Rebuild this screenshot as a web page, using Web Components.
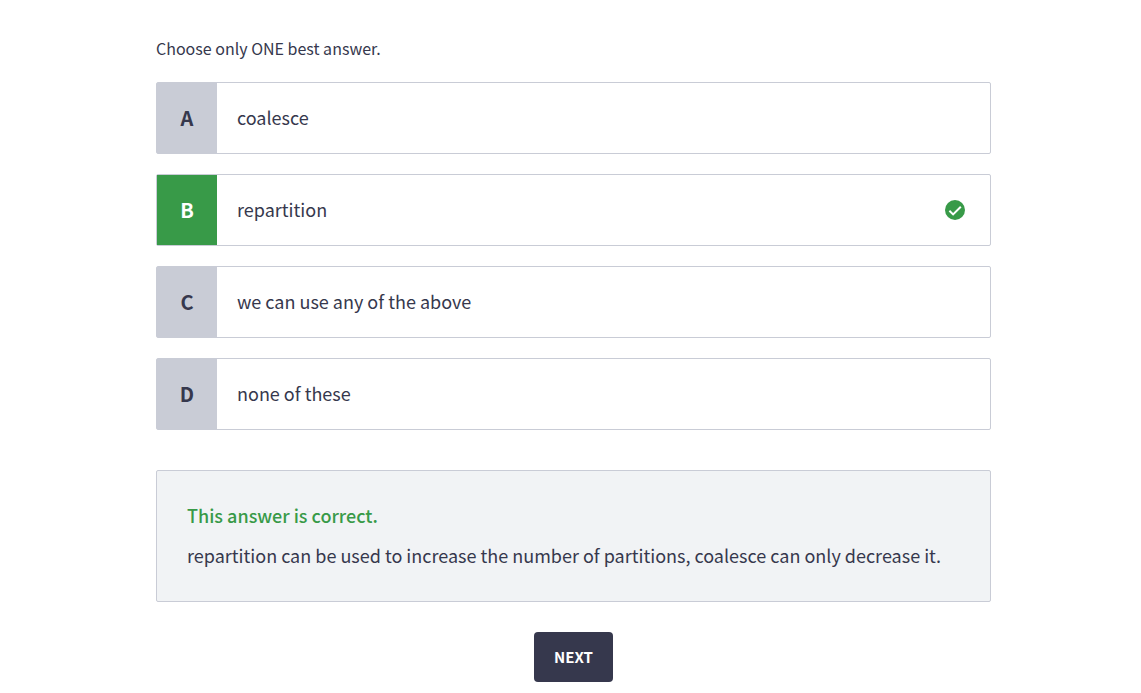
<!DOCTYPE html>
<html lang="en">
<head>
<meta charset="utf-8">
<meta name="viewport" content="width=device-width, initial-scale=1">
<title>Quiz</title>
<style>
  :root {
    --ink: #36384d;
    --line: #c9ccd6;
    --panel: #f1f3f5;
    --green: #389a48;
  }
  body {
    margin: 0;
    padding: 34px 16px 11px 22px;
    background: #fff;
    color: var(--ink);
    font: 18px/28px "Noto Sans CJK SC", "Open Sans", sans-serif;
  }
</style>
</head>
<body>
<quiz-question>
  <span slot="hint">Choose only ONE best answer.</span>
  <answer-option letter="A">coalesce</answer-option>
  <answer-option letter="B" correct>repartition</answer-option>
  <answer-option letter="C">we can use any of the above</answer-option>
  <answer-option letter="D">none of these</answer-option>
  <answer-feedback slot="feedback">
    <span slot="title">This answer is correct.</span>
    repartition can be used to increase the number of partitions, coalesce can only decrease it.
  </answer-feedback>
  <next-button slot="action">NEXT</next-button>
</quiz-question>

<template id="quiz-question">
  <style>
    :host { display: block; max-width: 835px; margin: 0 auto; }
    .hint { margin: 0 0 20px; font-size: 16px; }
    .options { display: grid; gap: 20px; }
    .feedback { margin: 40px 0 30px; }
    .action { display: flex; justify-content: center; }
  </style>
  <p class="hint" id="hint"><slot name="hint"></slot></p>
  <div class="options" role="radiogroup" aria-labelledby="hint"><slot></slot></div>
  <div class="feedback"><slot name="feedback"></slot></div>
  <div class="action"><slot name="action"></slot></div>
</template>

<template id="answer-option">
  <style>
    :host { display: block; }
    label {
      display: grid;
      grid-template-columns: 60px 1fr auto;
      align-items: center;
      min-height: 70px;
      position: relative;
      border: 1px solid var(--line);
      border-radius: 2px;
      background: #fff;
      cursor: pointer;
    }
    input { position: absolute; inset: 0; margin: 0; opacity: 0; cursor: pointer; }
    label:has(input:focus-visible) { outline: 2px solid var(--ink); }
    .letter {
      align-self: stretch;
      display: grid;
      place-items: center;
      background: var(--line);
      font-size: 20px;
      font-weight: 700;
    }
    .text { padding: 0 20px 2px; }
    svg { display: none; width: 20px; height: 20px; margin-right: 25px; }
    :host([correct]) .letter { background: var(--green); color: #fff; }
    :host([correct]) svg { display: block; }
  </style>
  <label>
    <input type="radio" name="answer">
    <span class="letter"></span>
    <span class="text"><slot></slot></span>
    <svg viewBox="0 0 20 20" aria-hidden="true">
      <circle cx="10" cy="10" r="10" fill="#389a48"/>
      <path d="M4.4 10.8 8.1 14.4 15.8 6.7" fill="none" stroke="#fff" stroke-width="2"/>
    </svg>
  </label>
</template>

<template id="answer-feedback">
  <style>
    :host {
      display: block;
      padding: 30px 30px 32px;
      border: 1px solid var(--line);
      border-radius: 2px;
      background: var(--panel);
    }
    h2 { margin: 0 0 12px; color: var(--green); font-size: 18px; font-weight: 500; }
    p { margin: 0; }
  </style>
  <h2><slot name="title"></slot></h2>
  <p><slot></slot></p>
</template>

<template id="next-button">
  <style>
    :host { display: block; }
    button {
      padding: 11px 20px;
      border: 0;
      border-radius: 4px;
      background: var(--ink);
      color: #fff;
      font: inherit;
      font-size: 15px;
      font-weight: 700;
      cursor: pointer;
    }
  </style>
  <button type="button"><slot></slot></button>
</template>

<script>
  class TemplateElement extends HTMLElement {
    constructor() {
      super();
      const template = document.getElementById(this.localName);
      this.attachShadow({ mode: "open" }).append(template.content.cloneNode(true));
    }
  }

  class AnswerOption extends TemplateElement {
    connectedCallback() {
      this.shadowRoot.querySelector(".letter").textContent = this.getAttribute("letter");
      this.input = this.shadowRoot.querySelector("input");
      this.input.checked = this.hasAttribute("correct");
      this.input.addEventListener("change", () => {
        for (const other of this.parentElement.querySelectorAll("answer-option")) {
          if (other !== this) other.input.checked = false;
        }
      });
    }
  }

  customElements.define("quiz-question", class extends TemplateElement {});
  customElements.define("answer-option", AnswerOption);
  customElements.define("answer-feedback", class extends TemplateElement {});
  customElements.define("next-button", class extends TemplateElement {});
</script>
</body>
</html>
